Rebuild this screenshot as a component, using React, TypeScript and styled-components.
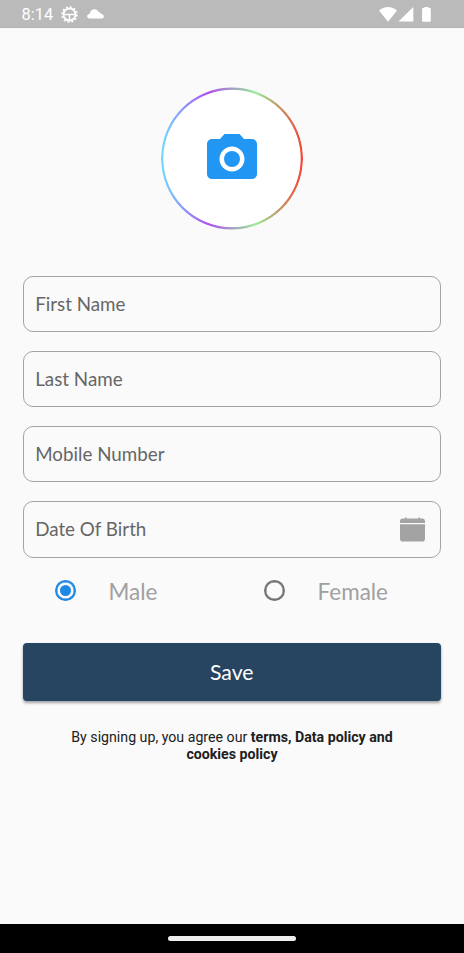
import React, { useState } from "react";
import styled, { createGlobalStyle } from "styled-components";

const GlobalStyle = createGlobalStyle`
  * { box-sizing: border-box; }
  body { margin: 0; background: #fafafa; }
`;

const Screen = styled.div`
  display: flex;
  flex-direction: column;
  width: 464px;
  height: 953px;
  overflow: hidden;
  background: #fafafa;
  font-family: Lato, sans-serif;
`;

const StatusBar = styled.header`
  display: flex;
  align-items: center;
  flex: none;
  height: 28px;
  padding: 1px 32px 0 21.5px;
  background: #bababa;
  border-bottom: 1px solid #b4b4b4;
  color: #fff;
`;

const Clock = styled.span`
  width: 39px;
  padding-top: 2px;
  font: 400 16.4px/20px Roboto, sans-serif;
  white-space: nowrap;
`;

const StatusIcons = styled.div<{ $end?: boolean }>`
  display: flex;
  align-items: center;
  gap: 9px;
  margin-left: ${(p) => (p.$end ? "auto" : "0")};
  svg { display: block; }
`;

const Content = styled.main`
  display: flex;
  flex-direction: column;
  flex: 1;
  padding: 59px 23px 0;
`;

const AvatarButton = styled.button`
  display: flex;
  align-items: center;
  justify-content: center;
  align-self: center;
  width: 142px;
  height: 143px;
  padding: 0;
  border: 0;
  border-radius: 50%;
  background:
    radial-gradient(circle at 50% 50%, #fff 68.2px, transparent 69.1px),
    linear-gradient(to right, #70dcff, #b04ff0 33.3%, #98ee98 66.6%, #f44336);
  clip-path: circle(71px at 50% 50%);
`;

const Form = styled.form`
  display: flex;
  flex-direction: column;
  margin-top: 45.5px;
`;

const Fields = styled.div`
  display: flex;
  flex-direction: column;
  gap: 18.6px;
`;

const Field = styled.div`
  display: flex;
  align-items: center;
  justify-content: space-between;
  height: 56.6px;
  padding: 0 15.5px 0 11.2px;
  border: 1.4px solid #a3a3a3;
  border-radius: 10px;
  color: #666;
  font-size: 18.8px;
  line-height: 24px;
`;

const RadioRow = styled.div`
  display: grid;
  grid-template-columns: 1fr 1fr;
  height: 66px;
`;

const RadioOption = styled.div`
  display: flex;
  align-items: center;
  gap: 32.5px;
  padding-left: 32px;
  color: #a0a0a0;
  font-size: 22.5px;
  line-height: 28px;
`;

const RadioLabel = styled.span`
  padding-top: 2px;
`;

const RadioMark = styled.span<{ $on: boolean }>`
  display: flex;
  align-items: center;
  justify-content: center;
  width: 21px;
  height: 21px;
  border: 2px solid ${(p) => (p.$on ? "#1e88e5" : "#737373")};
  box-shadow: inset 0 0 0 0.4px ${(p) => (p.$on ? "#1e88e5" : "#737373")};
  border-radius: 50%;
  &::after {
    content: "";
    width: 11px;
    height: 11px;
    border-radius: 50%;
    background: ${(p) => (p.$on ? "#1e88e5" : "transparent")};
  }
`;

const SaveButton = styled.button`
  height: 58.5px;
  margin-top: 19px;
  padding: 0 0.5px 0 0;
  border: 0;
  border-radius: 4px;
  background: #274460;
  box-shadow: 0 2px 3px rgba(0, 0, 0, 0.36);
  color: #fff;
  font: 400 21.2px/28px Lato, sans-serif;
`;

const Terms = styled.p`
  margin: 28px 0 0;
  color: #202020;
  font: 400 14.18px/16.5px Roboto, sans-serif;
  text-align: center;
  b { font-weight: 700; }
`;

const NavBar = styled.footer`
  display: flex;
  flex: none;
  align-items: center;
  justify-content: center;
  height: 29px;
  background: #000;
`;

const HomeHandle = styled.span`
  width: 128px;
  height: 5px;
  border-radius: 3px;
  background: #eee;
`;

const GearIcon = () => (
  <svg width="17" height="17" viewBox="0 0 17 17" fill="none" stroke="#fff">
    <circle cx="8.5" cy="8.5" r="6" strokeWidth="1.8" />
    <circle cx="8.5" cy="8.5" r="7.5" strokeWidth="1.6" strokeDasharray="2 1.927" />
    <path d="M3 8.5h11M8.5 8.5v5.5" strokeWidth="1.5" />
  </svg>
);

const CloudIcon = () => (
  <svg width="17" height="10" viewBox="0 0 17 10" fill="#fff">
    <path d="M2.500 9.500C-.7 9.500-.7 5.200 2.700 4.700 3.600-.6 10-1 11.800 3.200 13 3.200 14 4 14.200 5 17.700 5.300 17.500 9.500 14.600 9.500Z" />
  </svg>
);

const SignalIcons = () => (
  <svg width="53" height="17" viewBox="0 0 53 17" fill="#fff">
    <path d="M0 4.600C5.300-.2 12.700-.2 18 4.600L9 15.700Z" />
    <path d="M34.300.9V15.500H19.500Z" />
    <path d="M45.300 2v-.9h4.200V2h1.300q1 0 1 1v11.800q0 1-1 1h-6.700q-1 0-1-1V3q0-1 1-1Z" />
  </svg>
);

const CameraIcon = () => (
  <svg width="60" height="60" viewBox="0 0 24 24" fill="#2196f3">
    <circle cx="12" cy="12" r="3.2" />
    <path d="M9 2 7.170 4H4c-1.100 0-2 .9-2 2v12c0 1.100.9 2 2 2h16c1.100 0 2-.9 2-2V6c0-1.100-.9-2-2-2h-3.170L15 2H9zm3 15c-2.760 0-5-2.240-5-5s2.240-5 5-5 5 2.240 5 5-2.240 5-5 5z" />
  </svg>
);

const CalendarIcon = () => (
  <svg width="25" height="25" viewBox="0 0 25 25" fill="#a3a3a3">
    <path d="M0 6V4.500Q0 1.500 2.800 1.500H5V.9q0-.7.8-.7t.8.7v.6h11.800v-.6q0-.7.8-.7t.8.7v.6h2.200Q25 1.500 25 4.500V6Z" />
    <path d="M0 7.300h25v14.500q0 2.800-2.800 2.800H2.800Q0 24.600 0 21.800Z" />
  </svg>
);

const fields = ["First Name", "Last Name", "Mobile Number", "Date Of Birth"];
const genders = ["Male", "Female"];

export default function App() {
  const [gender, setGender] = useState("Male");
  return (
    <>
      <GlobalStyle />
      <Screen>
        <StatusBar>
          <Clock>8:14</Clock>
          <StatusIcons>
            <GearIcon />
            <CloudIcon />
          </StatusIcons>
          <StatusIcons $end>
            <SignalIcons />
          </StatusIcons>
        </StatusBar>
        <Content>
          <AvatarButton type="button" aria-label="Add photo">
            <CameraIcon />
          </AvatarButton>
          <Form>
            <Fields>
              {fields.map((name) => (
                <Field key={name}>
                  <span>{name}</span>
                  {name === "Date Of Birth" && <CalendarIcon />}
                </Field>
              ))}
            </Fields>
            <RadioRow role="radiogroup">
              {genders.map((name) => (
                <RadioOption
                  key={name}
                  role="radio"
                  aria-checked={gender === name}
                  onClick={() => setGender(name)}
                >
                  <RadioMark $on={gender === name} />
                  <RadioLabel>{name}</RadioLabel>
                </RadioOption>
              ))}
            </RadioRow>
            <SaveButton type="button">Save</SaveButton>
          </Form>
          <Terms>
            By signing up, you agree our <b>terms, Data policy and<br />cookies policy</b>
          </Terms>
        </Content>
        <NavBar>
          <HomeHandle />
        </NavBar>
      </Screen>
    </>
  );
}
